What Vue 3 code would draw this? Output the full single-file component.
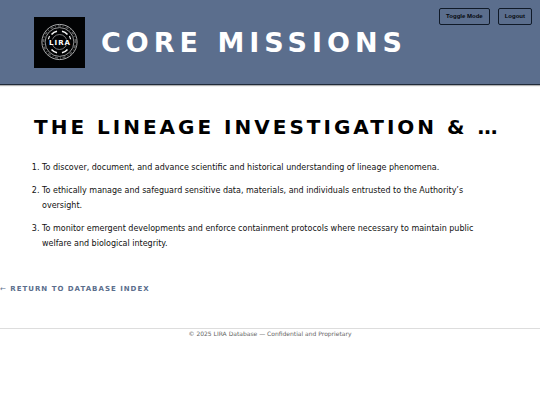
<template>
  <div class="page">
    <header class="page-header">
      <svg class="logo" viewBox="0 0 51 51" role="img" aria-label="LIRA">
        <rect width="51" height="51" fill="#020304" />
        <g fill="none" stroke="#b9babb">
          <circle cx="25.5" cy="25" r="17.6" stroke-width="0.9" />
          <circle cx="25.5" cy="25" r="14.4" stroke-width="0.8" />
          <circle cx="25.5" cy="25" r="16" stroke-width="1.6" stroke-dasharray="1 2.2 3 1.6" opacity="0.45" />
          <circle cx="25.5" cy="25" r="7.5" stroke-width="0.8" opacity="0.8" />
        </g>
        <g fill="none" stroke="#f4f4f4" stroke-width="1.6">
          <path d="M17.5 17.5a10.6 10.6 0 0 1 5.5-3.3M28 14.2a10.6 10.6 0 0 1 5.5 3.3" />
          <path d="M17.5 32.5a10.6 10.6 0 0 0 5.5 3.3M28 35.8a10.6 10.6 0 0 0 5.5-3.3" />
          <path d="M15.5 19l-1.2 3.5M35.5 19l1.2 3.5" stroke-width="1.1" />
        </g>
        <rect x="14" y="22.5" width="23" height="5.5" fill="#020304" />
        <text x="26" y="28" class="logo-text">LIRA</text>
      </svg>
      <h1 class="page-title">Core Missions</h1>
      <div class="header-actions">
        <button class="header-btn" type="button" @click="toggleMode">Toggle Mode</button>
        <button class="header-btn" type="button">Logout</button>
      </div>
    </header>

    <main>
      <section class="missions">
        <h2 class="section-title">The Lineage Investigation &amp; …</h2>
        <ol class="mission-list">
          <li v-for="mission in missions" :key="mission">{{ mission }}</li>
        </ol>
      </section>
      <a class="return-link" href="#"><span class="arrow">←</span> Return to Database Index</a>
    </main>

    <footer class="page-footer">© 2025 LIRA Database — Confidential and Proprietary</footer>
  </div>
</template>

<script setup>
const missions = [
  'To discover, document, and advance scientific and historical understanding of lineage phenomena.',
  'To ethically manage and safeguard sensitive data, materials, and individuals entrusted to the Authority’s oversight.',
  'To monitor emergent developments and enforce containment protocols where necessary to maintain public welfare and biological integrity.'
]

const toggleMode = () => {
  document.body.classList.toggle('dark')
}
</script>

<style>
body {
  background: #fff;
  color: #111;
}

body.dark {
  background: #14181f;
  color: #eee;
}
</style>

<style scoped>
.page {
  font-family: Verdana, 'DejaVu Sans', sans-serif;
  font-size: 8px;
  line-height: 15px;
}

.page-header {
  position: relative;
  display: flex;
  align-items: center;
  gap: 16px;
  padding: 17px 34px 16px;
  background: #5b6e8d;
  border-bottom: 1px solid #202a38;
  box-shadow: 0 1px 1px rgba(0, 0, 0, 0.3);
}

.logo {
  flex: none;
  width: 51px;
  height: 51px;
}

.logo-text {
  fill: #fff;
  font-family: 'DejaVu Sans', sans-serif;
  font-size: 7px;
  font-weight: bold;
  letter-spacing: 1px;
  text-anchor: middle;
}

.page-title {
  margin: 0;
  color: #fff;
  font-size: 27px;
  line-height: 36px;
  letter-spacing: 5px;
  text-transform: uppercase;
}

.header-actions {
  position: absolute;
  top: 8px;
  right: 8px;
  display: flex;
  gap: 8px;
}

.header-btn {
  padding: 3px 6px;
  background: transparent;
  border: 1px solid #101a28;
  border-radius: 2px;
  color: #05080e;
  font-family: Arial, 'Liberation Sans', sans-serif;
  font-size: 6px;
  font-weight: bold;
  line-height: 9px;
  cursor: pointer;
}

.missions {
  padding: 27px 34px 0;
}

.section-title {
  margin: 0;
  color: #000;
  font-size: 20px;
  line-height: 30px;
  letter-spacing: 3px;
  text-transform: uppercase;
}

.mission-list {
  margin: 18px 0 0;
  padding: 0 20px 0 8px;
}

.mission-list li {
  margin-bottom: 8px;
}

.return-link {
  display: block;
  margin-top: 31px;
  color: #5b6e8d;
  font-size: 7px;
  font-weight: bold;
  letter-spacing: 1px;
  text-decoration: none;
  text-transform: uppercase;
}

.arrow {
  font-weight: normal;
}

.page-footer {
  margin-top: 31px;
  border-top: 1px solid #ddd;
  color: #666;
  font-size: 6px;
  line-height: 10px;
  text-align: center;
}
</style>
